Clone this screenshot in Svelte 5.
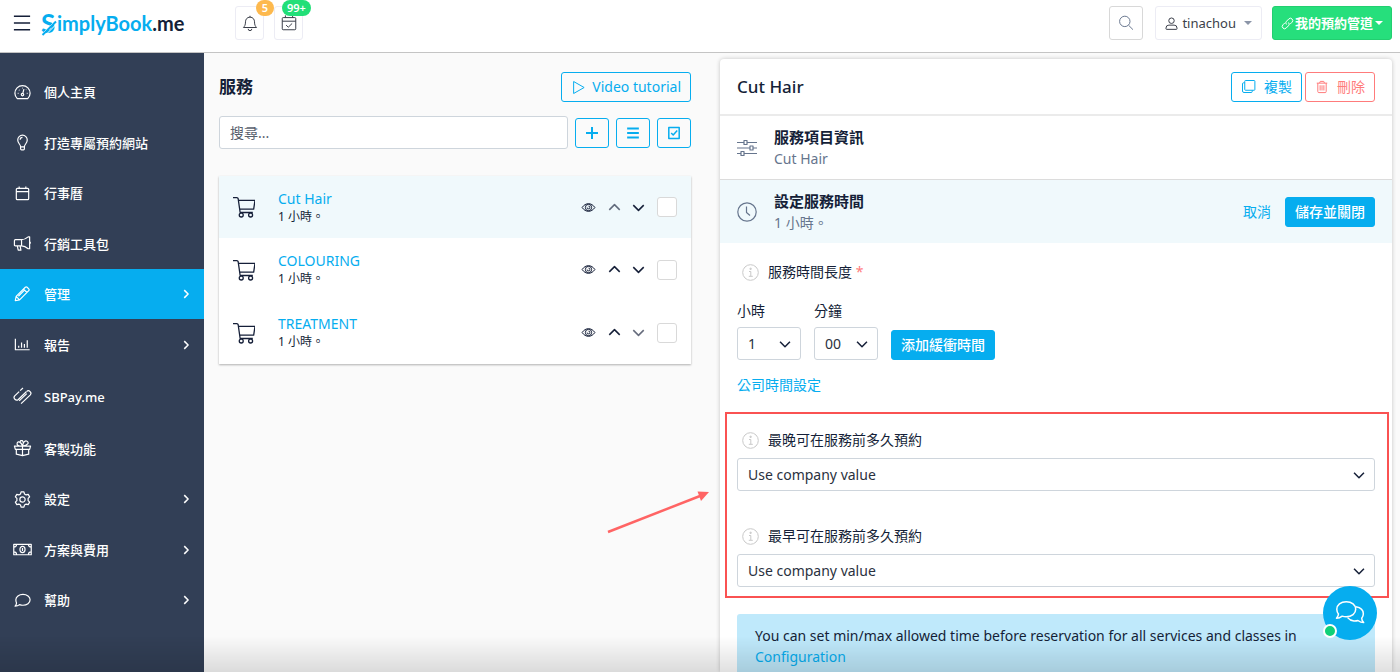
<script lang="ts">
  interface MenuItem {
    label: string;
    icon: string;
    active?: boolean;
    sub?: boolean;
  }

  const menu: MenuItem[] = [
    { label: '個人主頁', icon: 'dashboard' },
    { label: '打造專屬預約網站', icon: 'bulb' },
    { label: '行事曆', icon: 'calendar' },
    { label: '行銷工具包', icon: 'megaphone' },
    { label: '管理', icon: 'pencil', active: true, sub: true },
    { label: '報告', icon: 'chart', sub: true },
    { label: 'SBPay.me', icon: 'pay' },
    { label: '客製功能', icon: 'gift' },
    { label: '設定', icon: 'gear', sub: true },
    { label: '方案與費用', icon: 'money', sub: true },
    { label: '幫助', icon: 'comment', sub: true },
  ];

  const services = [
    { name: 'Cut Hair', duration: '1 小時。' },
    { name: 'COLOURING', duration: '1 小時。' },
    { name: 'TREATMENT', duration: '1 小時。' },
  ];

  const limits = [
    { id: 'min-time', label: '最晚可在服務前多久預約' },
    { id: 'max-time', label: '最早可在服務前多久預約' },
  ];

  // All icons are line drawings on a 20x20 grid
  const icons: Record<string, string> = {
    burger: 'M1 2.500h18M1 10h18M1 17.500h18',
    bell: 'M10 2v1.500M10 3.500c-3.400 0-5 2.600-5 5.200 0 3.600-1 4.900-2.300 6.300h14.600C16 13.600 15 12.300 15 8.700c0-2.600-1.600-5.200-5-5.200zM8 16.500a2 2 0 0 0 4 0',
    booking: 'M3.500 4h13q1 0 1 1v11.500q0 1-1 1h-13q-1 0-1-1V5q0-1 1-1zM2.500 8h15M6 1.500V4M14 1.500V4M6.800 12.300l2.400 2.400 4.300-4.200',
    search: 'M8.500 1.500a6.500 6.500 0 1 1 0 13 6.500 6.500 0 0 1 0-13zM13.200 12.800l5.500 5.500',
    user: 'M10 1.500a4.200 4.200 0 1 1 0 8.400 4.200 4.200 0 0 1 0-8.400zM1.500 18v-1q0-4.500 4.500-4.500h8q4.500 0 4.500 4.500v1q0 1-1 1h-15q-1 0-1-1z',
    link: 'M8.500 11.500a3.500 3.500 0 0 1 0-5l3.500-3.500a3.500 3.500 0 0 1 5 5l-3 3M11.500 8.500a3.500 3.500 0 0 1 0 5L8 17a3.500 3.500 0 0 1-5-5l3-3',
    dashboard: 'M4.500 16.500h11a8 8 0 1 0-11 0zM10 13.500a1.300 1.300 0 1 0 0-2.600 1.300 1.300 0 0 0 0 2.600zM10.300 10.900l1.200-4.400M5 11h.8M14.500 11h.8M6.300 7.300l.5.500M9.500 5.300h.6M13.700 7.300l.4-.4',
    bulb: 'M8 14.500c0-2.600-3-3.500-3-7.200a5 5 0 0 1 10 0c0 3.700-3 4.600-3 7.200zM8 14.500v2.200q0 1 1 1h2q1 0 1-1v-2.200M7.500 7.200A2.600 2.600 0 0 1 10 4.700',
    calendar: 'M4.500 4.500h11q1 0 1 1v10q0 1-1 1h-11q-1 0-1-1v-10q0-1 1-1zM3.500 8h13M6.500 2.500v2M13.500 2.500v2',
    megaphone: 'M2.500 6H9c3 0 5-1.300 7-3h1.500v12.500H16c-2-1.700-4-3-7-3H2.500q-1 0-1-1V7q0-1 1-1zM9 6v6.500M4.500 12.500l1 4.500h2.800l-.8-4.500M17.500 8q1.500 1.200 0 2.500',
    pencil: 'M2.500 17.500l1-4.800L13.700 2.500q1-1 2 0l1.800 1.800q1 1 0 2L7.300 16.500zM3.500 12.700l3.800 3.800M11.700 4.500l3.800 3.800M6 12.500l6.500-6.500',
    chart: 'M2.500 4v11.500h15M6 13.300v-2M9 13.300V7.800M12 13.300v-3.800M15 13.300V5.500',
    pay: 'M10.500 1L7.500 3.800M6.500 4.800L1.800 9.300a2.700 2.700 0 0 0 3.800 3.800L14 5M14.500 7l-8 7.600M8.500 17.500L18 8.500a2.600 2.600 0 0 0-3.700-3.700',
    gift: 'M1.500 7.500h17l-1 3.500h-15zM3.500 11v5l6.500 1.500 6.500-1.500v-5M10 7.500v10M10 7.500C5 7.500 3.500 6 4.500 4s4-1 5.500 3.500c.5-4.500 3-6.500 5-5s1 4-5 5M7 4l1-2.200h2L11 4',
    gear: 'M8.500 2h3l.6 2.200 1.700 1 2.200-.6 1.500 2.600-1.600 1.600v2.400l1.600 1.600-1.500 2.600-2.200-.6-1.700 1-.6 2.200h-3l-.6-2.200-1.700-1-2.200.6-1.500-2.600 1.600-1.600V8.800L2.500 7.200 4 4.600l2.200.6 1.700-1zM10 7.200a2.800 2.800 0 1 1 0 5.600 2.800 2.800 0 0 1 0-5.600z',
    money: 'M.8 4.500h18.400v11H.8zM10 6.800c3.600 0 3.600 6.400 0 6.400s-3.600-6.400 0-6.400zM10 8.500v3M.8 7.500q3 0 3-3M19.200 7.500q-3 0-3-3M.8 12.500q3 0 3 3M19.200 12.500q-3 0-3 3',
    comment: 'M10.500 3.500c4.200 0 7.500 2.500 7.500 5.800s-3.300 5.700-7.500 5.700q-2 0-3.600-.7-1.900 1.700-4.700 1.700 1.300-1.400 1.500-3.300Q3 11.200 3 9.300C3 6 6.300 3.500 10.500 3.500z',
    right: 'M7.500 4.500L13 10l-5.500 5.500',
    up: 'M4.500 12.500L10 7l5.500 5.500',
    down: 'M4.500 7.500L10 13l5.500-5.500',
    play: 'M3.500 2L17.500 10 3.500 18z',
    plus: 'M10 4v12M4 10h12',
    list: 'M3.500 5h13M3.500 10h13M3.500 15h13',
    check: 'M3.500 3h13v14h-13zM6.500 10l2.500 2.500 5-5.500',
    cart: 'M0 1.500h3.500q1 0 1.200 1L6.500 15H18M4.900 4H20l-1.200 8H6.200M7.500 15.500a1.800 1.800 0 1 1 0 3.600 1.800 1.800 0 0 1 0-3.600zM16 15.500a1.800 1.800 0 1 1 0 3.600 1.800 1.800 0 0 1 0-3.600z',
    eye: 'M1.500 10C6 3.200 14 3.200 18.500 10 14 16.800 6 16.800 1.500 10zM10 5.800a4.200 4.200 0 1 1 0 8.400 4.200 4.200 0 0 1 0-8.400zM10 8.200a1.800 1.800 0 1 1-1.800 1.800',
    copy: 'M6 2h11.500q1 0 1 1v11q0 1-1 1H6q-1 0-1-1V3q0-1 1-1zM5 5H3.500q-1.500 0-1.500 1.500V16q0 2 2 2h9.500q1.500 0 1.500-1.500V15',
    trash: 'M2.500 4.500h15M4 4.500v12q0 1.500 1.500 1.500h9q1.500 0 1.500-1.500v-12M6.500 4.500l1-2.500h5l1 2.500M7.300 7.500v7.500M10 7.500v7.500M12.700 7.500v7.500',
    sliders: 'M0 4.500h7M10 4.500h10M7 2.500h3v4H7zM0 10h13M16 10h4M13 8h3v4h-3zM0 15.500h4M7 15.500h13M4 13.500h3v4H4z',
    clock: 'M10 .8a9.200 9.200 0 1 1 0 18.400A9.200 9.200 0 0 1 10 .8zM9.500 4.500v6l3.500 3',
    chat: 'M7.500 2.500c3.700 0 6.300 2.200 6.300 5s-2.600 5-6.300 5q-1.500 0-2.700-.4Q3 13.500 1 13.500q1.300-1.400 1.300-2.800Q1.200 9.300 1.200 7.500c0-2.800 2.600-5 6.300-5zM14 5.800c2.900.5 4.900 2.300 4.900 4.700q0 1.700-1.100 3 0 1.500 1.300 2.900-2 0-3.800-1.400-1.300.4-2.700.3-2.600-.2-4.200-2.200',
  };
</script>

{#snippet icon(name: string, size = 20, stroke = 1)}
  <svg
    class="icon"
    width={size}
    height={size}
    viewBox="0 0 20 20"
    fill="none"
    stroke="currentColor"
    stroke-width={(stroke * 20) / size}
    stroke-linejoin="round"
    aria-hidden="true"
  >
    <path d={icons[name]} />
  </svg>
{/snippet}

{#snippet info()}
  <svg class="info" width="17" height="17" viewBox="0 0 17 17" fill="none" stroke="currentColor" aria-hidden="true">
    <circle cx="8.500" cy="8.500" r="7.800" />
    <path d="M7 7.500h1.800v4.500M6.800 12.300h4M8 4.200h1.200v1.200H8z" />
  </svg>
{/snippet}

<div class="app">
  <header class="topbar">
    <div class="brand">
      <button class="plain" aria-label="Menu">{@render icon('burger', 18, 1.4)}</button>
      <a class="logo" href="#home">
        <span class="logo-s">S<svg viewBox="0 0 16 22" aria-hidden="true">
          <path d="M0 21L13 8M3 22.500L16 9.500" stroke="#fff" stroke-width="1" />
          <path d="M1.500 21L15 7.500" stroke="#06adef" stroke-width="2" />
        </svg></span><span>implyBook</span><span class="logo-me">.me</span>
      </a>
    </div>
    <div class="alerts">
      <button class="box small" aria-label="Notifications">
        {@render icon('bell', 18)}
        <span class="badge orange">5</span>
      </button>
      <button class="box small" aria-label="Bookings">
        {@render icon('booking', 18, 1)}
        <span class="badge green">99+</span>
      </button>
    </div>
    <div class="account">
      <button class="box find" aria-label="Search">{@render icon('search', 16)}</button>
      <button class="box user">
        {@render icon('user', 13)}
        <span>tinachou</span>
        <i class="caret"></i>
      </button>
      <button class="box channels">
        {@render icon('link', 13)}
        <span>我的預約管道</span>
        <i class="caret"></i>
      </button>
    </div>
  </header>

  <div class="body">
    <nav class="sidebar">
      <ul>
        {#each menu as item}
          <li>
            <a href="#{item.icon}" class={item.icon} class:active={item.active}>
              {@render icon(item.icon, item.icon === 'pencil' ? 18 : 19, 1.2)}
              <span>{item.label}</span>
              {#if item.sub}
                {@render icon('right', 14, 1.5)}
              {/if}
            </a>
          </li>
        {/each}
      </ul>
    </nav>

    <main>
      <section class="services">
        <div class="title-row">
          <h1>服務</h1>
          <button class="btn outline">{@render icon('play', 15)}<span>Video tutorial</span></button>
        </div>
        <div class="search-row">
          <input type="search" placeholder="搜尋..." aria-label="搜尋" />
          <button class="btn outline square" aria-label="Add">{@render icon('plus', 20, 2)}</button>
          <button class="btn outline square" aria-label="List">{@render icon('list', 18, 2)}</button>
          <button class="btn outline square" aria-label="Select all">{@render icon('check', 16, 1.5)}</button>
        </div>
        <ul class="service-list">
          {#each services as service, i}
            <li class:selected={i === 0}>
              {@render icon('cart', 22, 1.3)}
              <div class="service-text">
                <a href="#service-{i}">{service.name}</a>
                <span>{service.duration}</span>
              </div>
              <div class="tools">
                <button class="plain" aria-label="Visibility">{@render icon('eye', 15)}</button>
                <button class="plain" aria-label="Move up" disabled={i === 0}>{@render icon('up', 19, 1.5)}</button>
                <button class="plain" aria-label="Move down" disabled={i === services.length - 1}>
                  {@render icon('down', 19, 1.5)}
                </button>
                <input type="checkbox" aria-label={service.name} />
              </div>
            </li>
          {/each}
        </ul>
      </section>

      <section class="detail">
        <div class="detail-head">
          <h2>Cut Hair</h2>
          <button class="btn outline">{@render icon('copy', 15)}<span>複製</span></button>
          <button class="btn outline danger">{@render icon('trash', 14)}<span>刪除</span></button>
        </div>

        <div class="block">
          {@render icon('sliders', 20, 1.2)}
          <div class="block-text">
            <h3>服務項目資訊</h3>
            <p>Cut Hair</p>
          </div>
        </div>

        <div class="block open">
          {@render icon('clock', 20, 1.2)}
          <div class="block-text">
            <h3>設定服務時間</h3>
            <p>1 小時。</p>
          </div>
          <button class="plain cancel">取消</button>
          <button class="btn solid">儲存並關閉</button>
        </div>

        <div class="form">
          <div class="label-row">
            {@render info()}
            <span>服務時間長度 <em>*</em></span>
          </div>
          <div class="duration">
            <div class="field">
              <label for="hours">小時</label>
              <div class="select">
                <select id="hours"><option>1</option></select>
                {@render icon('down', 18, 1.5)}
              </div>
            </div>
            <div class="field">
              <label for="minutes">分鐘</label>
              <div class="select">
                <select id="minutes"><option>00</option></select>
                {@render icon('down', 18, 1.5)}
              </div>
            </div>
            <button class="btn solid">添加緩衝時間</button>
          </div>
          <a class="company-link" href="#company">公司時間設定</a>
        </div>

        <div class="limits">
          {#each limits as limit}
            <div class="limit">
              <div class="label-row">
                {@render info()}
                <label for={limit.id}>{limit.label}</label>
              </div>
              <div class="select">
                <select id={limit.id}><option>Use company value</option></select>
                {@render icon('down', 18, 1.5)}
              </div>
            </div>
          {/each}
        </div>

        <p class="note">
          You can set min/max allowed time before reservation for all services and classes in
          <a href="#configuration">Configuration</a>
        </p>

        <svg class="arrow" width="104" height="46" viewBox="0 0 104 46" aria-hidden="true">
          <path d="M2 43L94 7" stroke="#ff6464" stroke-width="2.500" />
          <path d="M91.500 2.500L103 3 95 12z" fill="#ff6464" />
        </svg>
      </section>
    </main>
  </div>

  <div class="fade"></div>
  <button class="chat" aria-label="Chat">
    {@render icon('chat', 30, 1.5)}
    <i></i>
  </button>
</div>

<style>
  :global(body) {
    margin: 0;
  }

  .app {
    --blue: #06adef;
    --navy: #323f56;
    --ink: #151f38;
    --muted: #66758d;
    --line: #ced5dc;

    display: flex;
    flex-direction: column;
    height: 100vh;
    overflow: hidden;
    background: #fafafa;
    color: var(--ink);
    font-family: 'Noto Sans', 'Noto Sans CJK TC', sans-serif;
    font-size: 14px;
    line-height: 22px;

    & *,
    & *::before {
      box-sizing: border-box;
    }
  }

  h1,
  h2,
  h3,
  p,
  ul {
    margin: 0;
    padding: 0;
  }

  ul {
    list-style: none;
  }

  a {
    color: var(--blue);
    text-decoration: none;
  }

  button,
  input,
  select {
    margin: 0;
    font: inherit;
    color: inherit;
  }

  .icon,
  .info {
    display: block;
    flex: none;
  }

  .plain {
    display: flex;
    padding: 0;
    border: none;
    background: none;
  }

  /* Top bar */
  .topbar {
    display: flex;
    align-items: center;
    flex: none;
    height: 53px;
    padding: 0 8px 6px 13px;
    border-bottom: 1px solid #c4c4c4;
    background: #fff;
  }

  .brand {
    display: flex;
    align-items: center;
    gap: 10px;
    width: 222px;
  }

  .logo {
    display: flex;
    align-items: center;
    font-family: Lato, sans-serif;
    font-size: 20px;
    font-weight: 700;
    line-height: 26px;
  }

  .logo-s {
    position: relative;
    width: 16px;
    font-size: 26px;

    & svg {
      position: absolute;
      left: 0;
      bottom: 0;
      width: 16px;
      height: 22px;
    }
  }

  .logo-me {
    color: var(--ink);
  }

  .alerts {
    display: flex;
    gap: 10px;
    flex: 1;
  }

  .box {
    position: relative;
    display: flex;
    align-items: center;
    justify-content: center;
    height: 34px;
    padding: 0;
    border: 1px solid #ececf4;
    border-radius: 3px;
    background: #fff;
    color: #3b3f4a;
  }

  .box.small {
    width: 29px;
  }

  .badge {
    position: absolute;
    left: 20px;
    top: -7px;
    min-width: 18px;
    height: 16px;
    padding: 0 5px;
    border-radius: 8px;
    color: #fff;
    font-size: 11px;
    font-weight: 600;
    line-height: 16px;
  }

  .badge.orange {
    background: #fdb94e;
  }

  .badge.green {
    left: 7px;
    background: #22df78;
  }

  .account {
    display: flex;
    gap: 10px;
  }

  .find {
    width: 34px;
    margin-right: 2px;
    border-color: #d8d8d8;
    color: #6a7890;
  }

  .user {
    gap: 4px;
    padding: 0 9px;
    font-size: 13px;
  }

  .caret {
    margin-left: 4px;
    border: 4px solid transparent;
    border-top-color: #8b95a8;
    border-bottom: none;
  }

  .channels {
    gap: 1px;
    padding: 0 8px;
    border-color: #22cf70;
    background: #26df7c;
    color: #fff;
    font-size: 13px;
    font-weight: 700;

    & .caret {
      margin-left: 1px;
      border-top-color: #fff;
    }
  }

  /* Sidebar */
  .body {
    display: flex;
    flex: 1;
    min-height: 0;
  }

  .sidebar {
    flex: none;
    width: 204px;
    padding-top: 14px;
    background: var(--navy);

    & a {
      display: flex;
      align-items: center;
      gap: 12px;
      height: 50px;
      padding: 0 11px 0 13px;
      color: #fff;
      font-size: 13px;
      font-weight: 500;
    }

    & li:nth-child(even) a {
      height: 51px;
    }

    & a.pay {
      height: 53px;
    }

    & a.active {
      background: var(--blue);
    }

    & a.pencil {
      gap: 13px;
    }

    & span {
      flex: 1;
    }
  }

  main {
    display: flex;
    gap: 29px;
    flex: 1;
    min-width: 0;
    padding: 6px 8px 0 15px;
  }

  /* Service list */
  .services {
    flex: 59;
    min-width: 0;
    padding-top: 13px;
  }

  h1 {
    flex: 1;
    font-size: 17px;
    font-weight: 600;
  }

  .title-row,
  .search-row {
    display: flex;
    align-items: center;
  }

  .search-row {
    gap: 7px;
    margin: 14px 0 27px;

    & input {
      flex: 1;
      min-width: 0;
      height: 33px;
      padding: 0 10px;
      border: 1px solid var(--line);
      border-radius: 3px;
      outline: none;
      background: #fff;

      &::placeholder {
        color: #59616e;
        opacity: 1;
      }
    }
  }

  .btn {
    display: flex;
    align-items: center;
    justify-content: center;
    gap: 6px;
    height: 30px;
    padding: 0 9px;
    border: 1px solid var(--blue);
    border-radius: 3px;
    white-space: nowrap;
  }

  .outline {
    background: #fff;
    color: var(--blue);
  }

  .services .outline {
    background: #fafafa;
  }

  .square {
    width: 34px;
    padding: 0;
  }

  .solid {
    background: var(--blue);
    color: #fff;
    font-weight: 500;
  }

  .danger {
    border-color: #ff7b7b;
    color: #ff7b7b;
  }

  .service-list {
    background: #fff;
    box-shadow: 0 1px 2px rgba(0, 0, 0, 0.3);

    & li {
      display: flex;
      align-items: center;
      height: 62px;
      padding: 0 14px;
    }

    & li + li {
      height: 63px;
    }

    & li.selected {
      background: #f0f9fc;
    }
  }

  .service-text {
    display: flex;
    flex-direction: column;
    flex: 1;
    margin-left: 23px;

    & a {
      line-height: 18px;
    }

    & span {
      font-size: 12px;
      line-height: 17px;
    }
  }

  .tools {
    display: flex;
    align-items: center;
    gap: 5px;

    & .plain:first-child {
      margin-right: 4px;
    }

    & .plain:disabled {
      opacity: 0.65;
    }

    & input {
      appearance: none;
      width: 20px;
      height: 20px;
      margin-left: 4px;
      border: 1px solid #d9d9d9;
      border-radius: 3px;
      background: #fff;
    }
  }

  /* Service detail */
  .detail {
    position: relative;
    flex: 84;
    min-width: 0;
    height: 100%;
    border-radius: 4px 4px 0 0;
    background: #fff;
    box-shadow: 0 0 4px rgba(0, 0, 0, 0.22);
  }

  .detail-head {
    display: flex;
    align-items: center;
    gap: 3px;
    height: 57px;
    padding: 0 17px;
    border-bottom: 2px solid #ebebeb;

    & .outline {
      gap: 8px;
    }
  }

  h2 {
    flex: 1;
    font-size: 17px;
    font-weight: 500;
  }

  .block {
    display: flex;
    align-items: center;
    height: 64px;
    padding: 0 17px;
    border-bottom: 1px solid #dcdcdc;
    color: var(--muted);
  }

  .block.open {
    height: 63px;
    border: none;
    background: #f0f9fc;
  }

  .block-text {
    flex: 1;
    margin-left: 17px;
  }

  h3 {
    color: var(--ink);
    font-size: 15px;
    font-weight: 600;
  }

  .cancel {
    margin-right: 14px;
    color: var(--blue);
  }

  .form {
    padding: 18px 17px 16px;
  }

  .label-row {
    display: flex;
    align-items: center;
    gap: 9px;
    padding-left: 5px;
  }

  .info {
    color: #c9c9c9;
  }

  em {
    color: #ff7b7b;
    font-style: normal;
  }

  .duration {
    display: flex;
    align-items: flex-end;
    gap: 13px;
    margin: 17px 0 14px;
  }

  .field {
    display: flex;
    flex-direction: column;
    gap: 5px;
    width: 64px;
  }

  .select {
    display: grid;
    align-items: center;

    & select,
    & .icon {
      grid-area: 1 / 1;
    }

    & select {
      appearance: none;
      width: 100%;
      height: 33px;
      padding: 0 10px;
      border: 1px solid var(--line);
      border-radius: 3px;
      background: #fff;
      color: #2a3140;
    }

    & .icon {
      justify-self: end;
      margin-right: 7px;
      pointer-events: none;
    }
  }

  .company-link {
    display: block;
  }

  .limits {
    display: flex;
    flex-direction: column;
    gap: 34px;
    margin: 0 3px 0 5px;
    padding: 15px 12px 9px 10px;
    border: 2px solid #fa5252;
  }

  .limit .select {
    margin-top: 7px;
  }

  .note {
    margin: 16px 17px 0;
    padding: 11px 18px;
    border-radius: 3px 3px 0 0;
    background: #bfe9fb;
    line-height: 21px;

    & a {
      display: block;
    }
  }

  /* Pointer from the list towards the framed fields */
  .arrow {
    position: absolute;
    right: 100%;
    top: 430px;
    margin-right: 10px;
  }

  .fade {
    position: fixed;
    left: 0;
    right: 0;
    bottom: 0;
    height: 36px;
    background: linear-gradient(transparent, rgba(0, 0, 0, 0.12));
    pointer-events: none;
  }

  .chat {
    position: fixed;
    right: 23px;
    bottom: 32px;
    display: flex;
    align-items: center;
    justify-content: center;
    width: 54px;
    height: 54px;
    padding: 0;
    border: none;
    border-radius: 50%;
    background: var(--blue);
    color: #fff;

    & i {
      position: absolute;
      left: 0;
      bottom: 2px;
      width: 14px;
      height: 14px;
      border: 2px solid #fff;
      border-radius: 50%;
      background: #10d078;
    }
  }
</style>
